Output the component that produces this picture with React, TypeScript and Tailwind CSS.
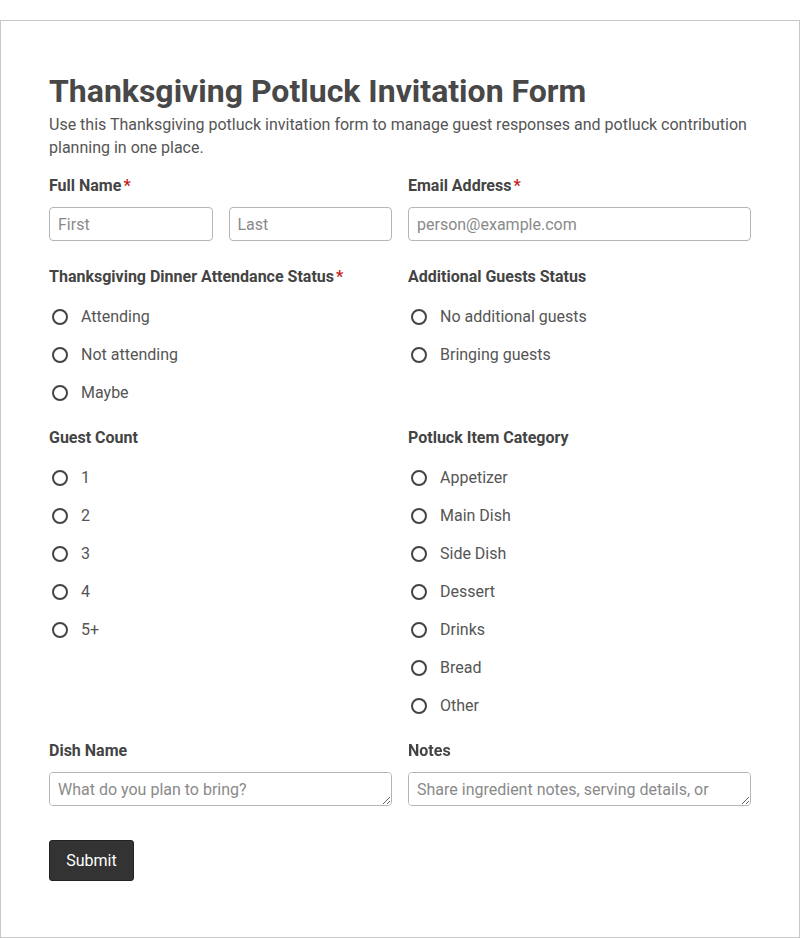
import React from 'react';

const font = { fontFamily: 'Roboto, "Liberation Sans", sans-serif' };

function Label({ text, required }: { text: string; required?: boolean }) {
  return (
    <div className="h-[22px] text-[16px] leading-[22px] font-bold text-[#444]">
      {text}
      {required && <span className="ml-[2px] text-[#c41e1e]">*</span>}
    </div>
  );
}

function RadioGroup({ name, options }: { name: string; options: string[] }) {
  return (
    <div className="mt-[10px] flex flex-col">
      {options.map((opt) => (
        <label key={opt} className="flex h-[38px] items-center">
          <input
            type="radio"
            name={name}
            className="ml-[3px] h-4 w-4 appearance-none rounded-full border-2 border-[#444] bg-white"
          />
          <span className="ml-[13px] text-[16px] text-[#555]">{opt}</span>
        </label>
      ))}
    </div>
  );
}

const inputCls =
  'h-[34px] w-full rounded-[4px] border border-[#b5b5b5] bg-white px-2 text-[16px] text-[#555] placeholder:text-[#8a8a8a] outline-none';

export default function App() {
  return (
    <div className="bg-white pt-5" style={font}>
      <div className="min-h-[918px] border border-[#c8c8c8] px-12 pt-[50px] pb-[56px]">
        <h1 className="text-[32px] leading-[40px] font-bold text-[#484848]">
          Thanksgiving Potluck Invitation Form
        </h1>
        <p className="mt-[2px] text-[16px] leading-[23px] text-[#555]">
          Use this Thanksgiving potluck invitation form to manage guest responses and potluck contribution
          planning in one place.
        </p>

        <div className="mt-[16px] grid grid-cols-2 gap-x-4">
          <div>
            <Label text="Full Name" required />
            <div className="mt-[10px] grid grid-cols-2 gap-x-4">
              <input className={inputCls} placeholder="First" />
              <input className={inputCls} placeholder="Last" />
            </div>
          </div>
          <div>
            <Label text="Email Address" required />
            <input className={`mt-[10px] ${inputCls}`} placeholder="person@example.com" />
          </div>
        </div>

        <div className="mt-[25px] grid grid-cols-2 gap-x-4">
          <div>
            <Label text="Thanksgiving Dinner Attendance Status" required />
            <RadioGroup name="attendance" options={['Attending', 'Not attending', 'Maybe']} />
          </div>
          <div>
            <Label text="Additional Guests Status" />
            <RadioGroup name="guests" options={['No additional guests', 'Bringing guests']} />
          </div>
        </div>

        <div className="mt-[15px] grid grid-cols-2 gap-x-4">
          <div>
            <Label text="Guest Count" />
            <RadioGroup name="count" options={['1', '2', '3', '4', '5+']} />
          </div>
          <div>
            <Label text="Potluck Item Category" />
            <RadioGroup
              name="category"
              options={['Appetizer', 'Main Dish', 'Side Dish', 'Dessert', 'Drinks', 'Bread', 'Other']}
            />
          </div>
        </div>

        <div className="mt-[15px] grid grid-cols-2 gap-x-4">
          <div>
            <Label text="Dish Name" />
            <textarea
              className={`mt-[10px] block resize-y py-[5px] leading-[24px] ${inputCls}`}
              placeholder="What do you plan to bring?"
            />
          </div>
          <div>
            <Label text="Notes" />
            <textarea
              className={`mt-[10px] block resize-y py-[5px] leading-[24px] ${inputCls}`}
              placeholder="Share ingredient notes, serving details, or timing questions."
            />
          </div>
        </div>

        <button className="mt-[34px] h-[41px] w-[85px] rounded-[3px] border border-[#222] bg-[#333] text-[16px] text-white">
          Submit
        </button>
      </div>
    </div>
  );
}
